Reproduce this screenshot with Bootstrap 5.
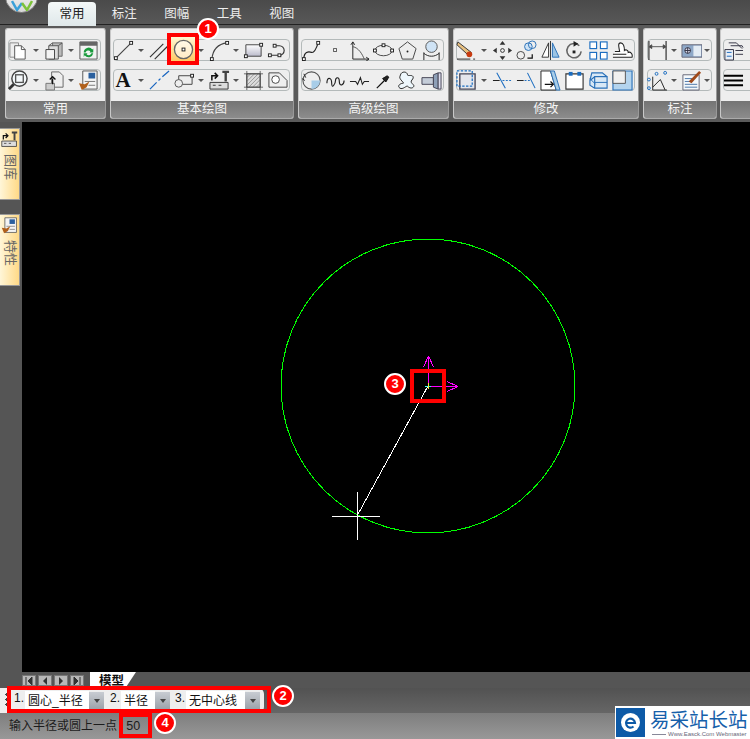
<!DOCTYPE html>
<html lang="zh-CN">
<head>
  <meta charset="UTF-8">
  <title>CAD</title>
  <link href="https://cdn.jsdelivr.net/npm/bootstrap@5.3.0/dist/css/bootstrap.min.css" rel="stylesheet">
  <style>
    body { margin: 0; background: #000; font-family: "Liberation Sans", "Noto Sans CJK SC", sans-serif; font-size: 12px; }
    .app { width: 750px; height: 739px; overflow: hidden; }
    /* top tabs */
    .tabbar { height: 25px; background: linear-gradient(#4a4a4a, #585858); border-bottom: 1px solid #222; padding-left: 48px; }
    .logo { left: 5px; top: -20px; width: 33px; height: 33px; background: linear-gradient(#fff, #d8d8d8); border: 1px solid #888; }
    .tab { width: 52.5px; text-align: center; color: #eee; line-height: 28px; font-size: 12.5px; }
    .tab.on { width: 48px; margin-top: 2px; height: 24px; line-height: 24px; color: #222; background: linear-gradient(#f4f8f8, #dfe8ea); border-radius: 4px 4px 0 0; margin-right: 2px; position: relative; z-index: 1; }
    /* ribbon */
    .ribbon { height: 97px; background: #5a5a5a; padding: 3px 0 0 5px; gap: 4px; overflow: hidden; }
    .grp { flex: none; height: 91px; background: #eee; border: 1px solid #aab; border-color: #c8c8c8 #999 #aaa #c8c8c8; border-radius: 3px; padding: 10px 2px 0; overflow: hidden; position: relative; }
    .g1 { width: 101px; } .g2 { width: 184px; } .g3 { width: 151px; } .g4 { width: 186px; }
    .g5 { width: 74px; padding-left: 3px; } .g6 { width: 60px; margin-left: -1px; }
    .cap { left: 0; right: 0; bottom: 0; height: 17px; line-height: 17px; text-align: center; color: #f4f4f4; font-size: 12.5px; background: linear-gradient(#747474, #8c8c8c); }
    .strip { height: 22px; border: 1px solid #b4baba; border-radius: 4px; margin-bottom: 8px; width: max-content; min-width: 30px; }
    .ic { width: 24px; height: 20px; flex: none; display: flex; align-items: center; justify-content: center; }
    .ic svg { width: 21px; height: 21px; overflow: visible; }
    .strip > :first-child { margin-left: -3px; }
    .ar { width: 12px; flex: none; height: 20px; display: flex; align-items: center; justify-content: center; }
    .ar.n { width: 10px; } .ar.t { width: 8px; }
    .ar::after { content: ""; border: 3px solid transparent; border-top: 3px solid #555; border-bottom: 0; }
    .serif { font: 700 21px "Liberation Serif", serif; color: #111; line-height: 20px; }
    .active-ic { height: 24px; margin-top: -2px; background: linear-gradient(#fff8d4, #ffc964); }
    /* middle */
    .middle { height: 550px; }
    .side { width: 22px; background: #555; padding-top: 6px; }
    .side-tab { width: 20px; height: 72px; background: linear-gradient(90deg, #fff6d8, #ffd986); border: 1px solid #999; border-left: 0; margin-bottom: 14px; color: #666; padding-top: 2px; }
    .side-tab svg { width: 17px; height: 17px; }
    .side-text { writing-mode: vertical-rl; text-orientation: sideways; font-size: 13px; line-height: 16px; margin-top: 6px; }
    .canvas { background: #000; }
    .canvas svg { display: block; shape-rendering: crispEdges; }
    /* sheet tabs */
    .sheets { height: 16px; background: #555; padding-left: 22px; }
    .nav-b { width: 14px; height: 11px; margin: 3px 2px 0 0; background: #b8b8b8; border: 1px solid #777; display: flex; align-items: center; justify-content: center; }
    .nav-b svg { width: 8px; height: 8px; }
    .sheet { margin-left: 4px; width: 46px; height: 14px; background: #fff; line-height: 18px; font-weight: 700; font-size: 12.5px; color: #111; padding-left: 9px; overflow: hidden; clip-path: polygon(0 0, 100% 0, 80% 100%, 0 100%); }
    /* command toolbar */
    .cmdrow { height: 25px; background: linear-gradient(#525252, #666); }
    .cmd { width: 264px; height: 25px; background: #eee; border-radius: 0 6px 6px 0; color: #111; padding-left: 5px; }
    .grip { width: 3px; height: 15px; margin-right: 6px; background: radial-gradient(circle at 1.5px 1.5px, #444 1.2px, transparent 1.4px) 0 0 / 3px 5px; }
    .num { width: 10px; font-size: 12px; margin-top: -5px; flex: none; }
    .num-2 { margin-left: 6px; } .num-3 { margin-left: 5px; }
    .field { height: 20px; line-height: 21px; background: #fff; padding-left: 3px; margin-left: 1px; font-size: 12px; flex: none; }
    .f1 { width: 64px; } .f2 { width: 34px; } .f3 { width: 59px; }
    .drop { width: 15px; height: 18px; flex: none; background: linear-gradient(#c8ccd2, #9aa0a8); display: flex; align-items: center; justify-content: center; }
    .drop::after { content: ""; border: 3px solid transparent; border-top: 4px solid #444; border-bottom: 0; }
    /* status */
    .status { height: 26px; background: linear-gradient(#7e7e7e, #989898); color: #1c1c1c; padding-left: 9px; line-height: 26px; }
    .status .sep { margin-left: 3px; }
    .status .val { margin-left: 3px; font-size: 12.5px; }
    .mark { right: 0; bottom: 0; width: 135px; height: 33px; background: #fff; padding: 2px 0 0 1px; }
    .mark-icon { width: 29px; height: 29px; background: #0d5aa7; flex: none; }
    .mark-title { color: #1660aa; font: 400 19.5px/18px "Noto Sans CJK SC", sans-serif; white-space: nowrap; margin: 2px 0 2px 5px; }
    .mark-sub { color: #667; font: 6px/8px "Liberation Sans", sans-serif; white-space: nowrap; margin-left: 7px; display: flex; align-items: center; gap: 2px; }
    .mark-sub::before { content: ""; width: 14px; border-top: 1px solid #889; }
    /* annotations */
    .box { border: 4px solid #f00; pointer-events: none; }
    .box-1 { left: 167px; top: 33px; width: 32px; height: 32px; }
    .box-2 { left: 7px; top: 686px; width: 264px; height: 27px; }
    .box-3 { left: 410px; top: 369px; width: 36px; height: 34px; }
    .box-4 { left: 119px; top: 713px; width: 33px; height: 25px; }
    .badge-n { width: 22px; height: 22px; background: #f00; border: 2.5px solid #fff; color: #fff; font: 700 13px/17px "Liberation Sans", sans-serif; text-align: center; }
    .badge-1 { left: 197px; top: 18px; } .badge-2 { left: 272px; top: 685px; }
    .badge-3 { left: 384px; top: 373px; } .badge-4 { left: 154px; top: 712px; }
  </style>
</head>
<body>
<svg width="0" height="0" class="position-absolute">
  <defs>
    <g id="node"><rect x="-1.5" y="-1.5" width="3" height="3" fill="#fff" stroke="#222" stroke-width="1"/></g>
    <symbol id="pages" viewBox="0 0 22 22"><path d="M2 3h9v15H2z" fill="#eee" stroke="#888"/><path d="M7 6h7l4 4v10H7z" fill="#fff" stroke="#555"/><path d="M14 6v4h4" fill="none" stroke="#555"/></symbol>
    <symbol id="copy3d" viewBox="0 0 22 22"><path d="M9 3h10v14H9z" fill="#bbb" stroke="#666"/><path d="M5 6h10v14H5zM5 6l4-3M15 6l4-3" fill="#ddd" stroke="#555"/><path d="M2 10h9v10H2z" fill="#f4f4f4" stroke="#444"/></symbol>
    <symbol id="refresh" viewBox="0 0 22 22"><path d="M2 2h18v18H2z" fill="#f2f2f2" stroke="#555"/><path d="M2 2h18v4H2z" fill="#666"/><path d="M6 13a5 5 0 0 1 9-3l1-1v4h-4l1-1a3 3 0 0 0-5 1zM16 14a5 5 0 0 1-9 2l-1 2v-4h4l-1 1a3 3 0 0 0 5-1z" fill="#1a9a3c"/></symbol>
    <symbol id="zoom" viewBox="0 0 22 22"><circle cx="12" cy="9" r="8" fill="#f4f8fa" stroke="#444" stroke-width="1.5"/><rect x="8" y="5" width="8" height="8" fill="none" stroke="#555" stroke-width="1.4"/><path d="M6 15l-5 5" stroke="#333" stroke-width="3"/></symbol>
    <symbol id="docarrow" viewBox="0 0 22 22"><path d="M8 2h8l4 4v12H8z" fill="#eee" stroke="#666"/><path d="M2 14h9v7H2z" fill="#ccc" stroke="#777"/><path d="M9 9v6M6 10l3-3 3 3" fill="none" stroke="#111" stroke-width="1.4"/></symbol>
    <symbol id="brushwin" viewBox="0 0 22 22"><path d="M5 1h15v19H5z" fill="#f4f4f4" stroke="#555"/><path d="M11 3h7v6h-7z" fill="#2a5f9e"/><path d="M7 12h11M11 16h7" stroke="#777"/><path d="M1 14l6 1 5-3-3 6-5 3z" fill="#b0601c"/></symbol>
    <symbol id="line" viewBox="0 0 22 22"><path d="M3 19L19 3" stroke="#444" stroke-width="1.2"/><use href="#node" x="3" y="19"/><use href="#node" x="19" y="3"/></symbol>
    <symbol id="parallel" viewBox="0 0 22 22"><path d="M1 18L15 4M6 20L20 6" stroke="#333" stroke-width="1.2" fill="none"/></symbol>
    <symbol id="circle" viewBox="0 0 22 22"><circle cx="11" cy="11" r="9.5" fill="#fff" fill-opacity=".6" stroke="#666" stroke-width="1.4"/><rect x="9.5" y="9.5" width="3" height="3" fill="#fff" stroke="#222"/></symbol>
    <symbol id="arc" viewBox="0 0 22 22"><path d="M3 20C4 10 10 4 19 3" fill="none" stroke="#444" stroke-width="1.2"/><use href="#node" x="3" y="20"/><use href="#node" x="19" y="3"/></symbol>
    <symbol id="rect" viewBox="0 0 22 22"><defs><linearGradient id="lg" x1="0" y1="0" x2="0" y2="1"><stop stop-color="#fff"/><stop offset="1" stop-color="#bbc"/></linearGradient></defs><path d="M3 5h16v12H3z" fill="url(#lg)" stroke="#444"/><use href="#node" x="19" y="5"/><use href="#node" x="3" y="17"/></symbol>
    <symbol id="pline" viewBox="0 0 22 22"><path d="M3 16h10a5 5 0 0 0 0-10h-5" fill="none" stroke="#333" stroke-width="1.2"/><use href="#node" x="3" y="16"/><use href="#node" x="13" y="16"/><use href="#node" x="8" y="6"/></symbol>
    <symbol id="dash" viewBox="0 0 22 22"><path d="M1 20l7-7M10 11l2-2M14 7l7-6" stroke="#1a66c0" stroke-width="1.3"/></symbol>
    <symbol id="insert" viewBox="0 0 22 22"><path d="M6 6h14v9H6z" fill="#eee" stroke="#444"/><circle cx="6" cy="14" r="4" fill="#eee" stroke="#555"/><use href="#node" x="20" y="6"/></symbol>
    <symbol id="block" viewBox="0 0 22 22"><path d="M1 13h19v7H1z" fill="#ddd" stroke="#333"/><path d="M14 2h7M17.5 2v10" stroke="#444" stroke-width="2.5"/><path d="M3 11V6h5M6 3l3 3-3 3" fill="none" stroke="#111" stroke-width="1.6"/><path d="M4 16h3M10 16h3" stroke="#333"/></symbol>
    <symbol id="hatch" viewBox="0 0 22 22"><path d="M4 4h14v14H4z" fill="#ddd" stroke="#444"/><path d="M4 8l4-4M4 12l8-8M4 16l12-12M6 18l12-12M10 18l8-8M14 18l4-4" stroke="#777" stroke-width=".7"/><path d="M1 4h20M1 18h20M4 1v20M18 1v20" stroke="#444" stroke-width=".8"/></symbol>
    <symbol id="shape" viewBox="0 0 22 22"><path d="M2 3h11l8 8v7H2z" fill="#eee" stroke="#444"/><circle cx="9" cy="10" r="4" fill="#fff" stroke="#444"/></symbol>
    <symbol id="spline" viewBox="0 0 22 22"><path d="M3 20c0-8 5-8 8-7s5-4 7-10" fill="none" stroke="#222" stroke-width="1.3"/><use href="#node" x="3" y="20"/><use href="#node" x="18" y="3"/></symbol>
    <symbol id="point" viewBox="0 0 22 22"><rect x="9" y="9" width="3" height="3" fill="#fff" stroke="#555"/></symbol>
    <symbol id="axis" viewBox="0 0 22 22"><path d="M4 2v18h17M4 2L2 5M4 2l2 3M21 20l-3-2M21 20l-3 2" fill="none" stroke="#222"/><path d="M4 7c6 1 10 8 12 13" fill="none" stroke="#555"/></symbol>
    <symbol id="ellipse" viewBox="0 0 22 22"><ellipse cx="11" cy="11" rx="9" ry="5.5" fill="#eee" stroke="#444"/><use href="#node" x="2" y="11"/><use href="#node" x="20" y="11"/><use href="#node" x="11" y="5.5"/></symbol>
    <symbol id="penta" viewBox="0 0 22 22"><path d="M11 2l9 7-3.5 11h-11L2 9z" fill="#eee" stroke="#444"/><circle cx="11" cy="12" r="1" fill="#222"/></symbol>
    <symbol id="ball" viewBox="0 0 22 22"><circle cx="11" cy="7" r="6" fill="#cfe3f5" stroke="#555"/><path d="M3 13v8M19 13v8M3 14c5 4 11 4 16 0" fill="none" stroke="#222"/></symbol>
    <symbol id="quad" viewBox="0 0 22 22"><circle cx="11" cy="11" r="9" fill="none" stroke="#555" stroke-width="1.2"/><path d="M11 11h9a9 9 0 0 1-9 9z" fill="#a8cde8"/><path d="M3 4l2 4M1 9l3 2" stroke="#222"/></symbol>
    <symbol id="wave" viewBox="0 0 22 22"><path d="M2 14c0-7 5-7 5 0s4 0 4-3 4-5 4 1 5 4 5-1" fill="none" stroke="#222" stroke-width="1.2"/></symbol>
    <symbol id="zig" viewBox="0 0 22 22"><path d="M1 12h6l2 3 3-7 2 7 2-3h5" fill="none" stroke="#222" stroke-width="1.1"/></symbol>
    <symbol id="pin" viewBox="0 0 22 22"><path d="M4 19l8-8" stroke="#111" stroke-width="1.3"/><path d="M10 9l5-3 1.5 1.5-3 5z" fill="#222" stroke="#111"/></symbol>
    <symbol id="cloud" viewBox="0 0 22 22"><path d="M5 3c3-2 6 0 6 2s6-1 6 3c0 2-3 3-2 5s4 3 2 5-5 0-6-1-5 4-8 2 0-5 3-5-4-4-3-7 1-3 2-4z" fill="#eef7fc" stroke="#222"/></symbol>
    <symbol id="cyl" viewBox="0 0 22 22"><path d="M1 8h12v7H1z" fill="#c4ccd8" stroke="#445"/><path d="M13 5l5-2v17l-5-2z" fill="#8ea0b8" stroke="#445"/><path d="M18 3h3v17h-3z" fill="#dde" stroke="#445"/></symbol>
    <symbol id="eraser" viewBox="0 0 22 22"><path d="M2 2l14 11-3 3L1 5z" fill="#e8c080" stroke="#333"/><circle cx="14" cy="15" r="3" fill="#c83a10"/><path d="M1 20h14M18 20h2" stroke="#222"/></symbol>
    <symbol id="move" viewBox="0 0 22 22"><path d="M11 1l-3 4h6zM11 21l-3-4h6zM1 11l4-3v6zM21 11l-4-3v6z" fill="#333"/><circle cx="11" cy="11" r="2" fill="none" stroke="#333"/></symbol>
    <symbol id="copyc" viewBox="0 0 22 22"><circle cx="5" cy="16" r="4" fill="none" stroke="#444"/><circle cx="13" cy="7" r="4" fill="#cfe3f5" stroke="#2a70b8"/><circle cx="17" cy="5" r="4" fill="none" stroke="#2a70b8"/><path d="M12 19h5v-4" fill="none" stroke="#111" stroke-width="1.3"/></symbol>
    <symbol id="mirror" viewBox="0 0 22 22"><path d="M9 3L2 18h7z" fill="#fff" stroke="#333"/><path d="M13 3l7 15h-7z" fill="#9cc4e4" stroke="#2a70b8"/><path d="M11 1v20" stroke="#333"/></symbol>
    <symbol id="rotate" viewBox="0 0 22 22"><path d="M16 6A7.5 7.5 0 1 0 18 12" fill="none" stroke="#666" stroke-width="1.6"/><path d="M10 1l5 3-5 3z" fill="#222"/><rect x="9" y="11" width="3" height="3" fill="#222"/></symbol>
    <symbol id="grid" viewBox="0 0 22 22"><g fill="#fff" stroke="#1a6cc0" stroke-width="1.2"><rect x="2" y="2" width="7" height="7"/><rect x="13" y="2" width="7" height="7"/><rect x="2" y="13" width="7" height="7"/><rect x="13" y="13" width="7" height="7"/></g></symbol>
    <symbol id="cloudline" viewBox="0 0 22 22"><path d="M1 15h14M1 18h20c1-4-2-6-4-5 0-3-3-3-4-2 0-4-1-8-4-8S7 7 8 12H3" fill="#fff" stroke="#222" stroke-width="1.1"/></symbol>
    <symbol id="dashbox" viewBox="0 0 22 22"><path d="M4 4h16v16H4z" fill="#e4e6ec" stroke="#445" stroke-width="1.4"/><path d="M1 1h16v16H1z" fill="none" stroke="#1a6cc0" stroke-width="1.3" stroke-dasharray="2.5 1.5"/></symbol>
    <symbol id="trim" viewBox="0 0 22 22"><path d="M5 3l9 16" stroke="#1a6cc0" stroke-width="1.1"/><path d="M1 11h7" stroke="#222" stroke-width="1.1"/><path d="M11 11h10" stroke="#1a6cc0" stroke-dasharray="2 1.5"/></symbol>
    <symbol id="extend" viewBox="0 0 22 22"><path d="M12 3l8 16" stroke="#1a6cc0" stroke-width="1.1"/><path d="M1 11h7" stroke="#222" stroke-width="1.1"/><path d="M9 11h6" stroke="#1a6cc0" stroke-dasharray="2 1.5"/></symbol>
    <symbol id="stretch" viewBox="0 0 22 22"><path d="M1 1h10l6 20H1z" fill="#fff" stroke="#222"/><path d="M11 1l6 20h4L15 1z" fill="#a8cde8" stroke="#2a70b8"/><path d="M5 15h9M11 12l3 3-3 3" fill="none" stroke="#111" stroke-width="1.3"/></symbol>
    <symbol id="rectdots" viewBox="0 0 22 22"><path d="M2 4h18v16H2z" fill="#fff" stroke="#333" stroke-width="1.2"/><rect x="5" y="2" width="4" height="4" fill="#1a6cc0"/><rect x="14" y="2" width="4" height="4" fill="#1a6cc0"/></symbol>
    <symbol id="box3d" viewBox="0 0 22 22"><path d="M7 7h13v12H7zM7 7l-5 4v5l5 3M20 7L15 3H4L2 11" fill="#d8e8f6" stroke="#2a70b8" stroke-width="1.2"/><path d="M2 9l6 6M7 13h13" stroke="#2a70b8"/></symbol>
    <symbol id="offset" viewBox="0 0 22 22"><path d="M1 1h20v20H1z" fill="#b4d4ee" stroke="#2a70b8" stroke-width="1.2"/><path d="M1 1h13v13H1z" fill="#f0f0f0" stroke="#555"/></symbol>
    <symbol id="dim" viewBox="0 0 22 22"><path d="M2 1v20M20 1v20" stroke="#444" stroke-width="1.4"/><path d="M2 7h18M2 7l3-2v4zM20 7l-3-2v4z" stroke="#555"/></symbol>
    <symbol id="tol" viewBox="0 0 22 22"><path d="M1 5h21v13H1z" fill="#8ea8c8" stroke="#667"/><circle cx="7" cy="11" r="3" fill="#dde" stroke="#334"/><path d="M4 11h6M7 8v6" stroke="#334"/><rect x="13" y="6" width="8" height="11" fill="#e4ecf4"/></symbol>
    <symbol id="coord" viewBox="0 0 22 22"><path d="M6 7v14h15M6 18L14 10l5 11" fill="none" stroke="#222"/><g fill="none" stroke="#1a6cc0"><circle cx="2" cy="10" r="1.5"/><circle cx="2" cy="19" r="1.5"/><circle cx="10" cy="4" r="1.5"/><circle cx="19" cy="3" r="1.5"/></g></symbol>
    <symbol id="note" viewBox="0 0 22 22"><path d="M2 5h17v16H2z" fill="#f4f8fb" stroke="#667"/><path d="M4 9h8M4 12h8M4 15h13M4 18h13" stroke="#4a74a8"/><path d="M8 12L19 1l2 2-10 11z" fill="#a04a1c"/></symbol>
    <symbol id="list" viewBox="0 0 22 22"><path d="M2 10h9v11H2z" fill="#e8eef6" stroke="#334"/><path d="M4 13h5M4 17h5" stroke="#1a6cc0"/><path d="M6 3h8l6 6M8 6h12l1 2M13 11h8M13 15h8" fill="none" stroke="#334"/></symbol>
    <symbol id="weight" viewBox="0 0 22 22"><path d="M1 6h20M1 11h20M1 16h20" stroke="#000" stroke-width="2"/></symbol>
  </defs>
</svg>

<div class="app position-relative d-flex flex-column">
  <!-- tab bar -->
  <div class="tabbar d-flex position-relative">
    <div class="logo position-absolute rounded-circle overflow-hidden d-flex align-items-end justify-content-center">
      <svg width="22" height="12" viewBox="0 0 22 12"><path d="M1 1l5 9 5-7" fill="none" stroke="#3aa0d8" stroke-width="2.5"/><path d="M11 3l5 7 5-9" fill="none" stroke="#7cc23a" stroke-width="2.5"/></svg>
    </div>
    <div class="tab on">常用</div>
    <div class="tab">标注</div>
    <div class="tab">图幅</div>
    <div class="tab">工具</div>
    <div class="tab">视图</div>
  </div>

  <!-- ribbon -->
  <div class="ribbon d-flex">
    <div class="grp g1">
      <div class="strip d-flex align-items-center"><span class="ic"><svg><use href="#pages"/></svg></span><span class="ar"></span><span class="ic"><svg><use href="#copy3d"/></svg></span><span class="ar n"></span><span class="ic"><svg><use href="#refresh"/></svg></span></div>
      <div class="strip d-flex align-items-center"><span class="ic"><svg><use href="#zoom"/></svg></span><span class="ar"></span><span class="ic"><svg><use href="#docarrow"/></svg></span><span class="ar n"></span><span class="ic"><svg><use href="#brushwin"/></svg></span></div>
      <div class="cap position-absolute">常用</div>
    </div>
    <div class="grp g2">
      <div class="strip d-flex align-items-center"><span class="ic"><svg><use href="#line"/></svg></span><span class="ar"></span><span class="ic"><svg><use href="#parallel"/></svg></span><span class="ic active-ic"><svg><use href="#circle"/></svg></span><span class="ar"></span><span class="ic"><svg><use href="#arc"/></svg></span><span class="ar n"></span><span class="ic"><svg><use href="#rect"/></svg></span><span class="ic"><svg><use href="#pline"/></svg></span></div>
      <div class="strip d-flex align-items-center"><span class="ic serif">A</span><span class="ar"></span><span class="ic"><svg><use href="#dash"/></svg></span><span class="ic"><svg><use href="#insert"/></svg></span><span class="ar"></span><span class="ic"><svg><use href="#block"/></svg></span><span class="ar n"></span><span class="ic"><svg><use href="#hatch"/></svg></span><span class="ic"><svg><use href="#shape"/></svg></span></div>
      <div class="cap position-absolute">基本绘图</div>
    </div>
    <div class="grp g3">
      <div class="strip d-flex align-items-center"><span class="ic"><svg><use href="#spline"/></svg></span><span class="ic"><svg><use href="#point"/></svg></span><span class="ic"><svg><use href="#axis"/></svg></span><span class="ic"><svg><use href="#ellipse"/></svg></span><span class="ic"><svg><use href="#penta"/></svg></span><span class="ic"><svg><use href="#ball"/></svg></span></div>
      <div class="strip d-flex align-items-center"><span class="ic"><svg><use href="#quad"/></svg></span><span class="ic"><svg><use href="#wave"/></svg></span><span class="ic"><svg><use href="#zig"/></svg></span><span class="ic"><svg><use href="#pin"/></svg></span><span class="ic"><svg><use href="#cloud"/></svg></span><span class="ic"><svg><use href="#cyl"/></svg></span></div>
      <div class="cap position-absolute">高级绘图</div>
    </div>
    <div class="grp g4">
      <div class="strip d-flex align-items-center"><span class="ic"><svg><use href="#eraser"/></svg></span><span class="ar"></span><span class="ic"><svg><use href="#move"/></svg></span><span class="ic"><svg><use href="#copyc"/></svg></span><span class="ic"><svg><use href="#mirror"/></svg></span><span class="ic"><svg><use href="#rotate"/></svg></span><span class="ic"><svg><use href="#grid"/></svg></span><span class="ic"><svg><use href="#cloudline"/></svg></span></div>
      <div class="strip d-flex align-items-center"><span class="ic"><svg><use href="#dashbox"/></svg></span><span class="ar"></span><span class="ic"><svg><use href="#trim"/></svg></span><span class="ic"><svg><use href="#extend"/></svg></span><span class="ic"><svg><use href="#stretch"/></svg></span><span class="ic"><svg><use href="#rectdots"/></svg></span><span class="ic"><svg><use href="#box3d"/></svg></span><span class="ic"><svg><use href="#offset"/></svg></span></div>
      <div class="cap position-absolute">修改</div>
    </div>
    <div class="grp g5">
      <div class="strip d-flex align-items-center"><span class="ic"><svg><use href="#dim"/></svg></span><span class="ar n"></span><span class="ic"><svg><use href="#tol"/></svg></span><span class="ar t"></span></div>
      <div class="strip d-flex align-items-center"><span class="ic"><svg><use href="#coord"/></svg></span><span class="ar n"></span><span class="ic"><svg><use href="#note"/></svg></span><span class="ar t"></span></div>
      <div class="cap position-absolute">标注</div>
    </div>
    <div class="grp g6">
      <div class="strip d-flex align-items-center"><span class="ic"><svg><use href="#list"/></svg></span><span class="ic"></span></div>
      <div class="strip d-flex align-items-center"><span class="ic"><svg><use href="#weight"/></svg></span><span class="ic"></span></div>
      <div class="cap position-absolute"></div>
    </div>
  </div>

  <!-- side panel and canvas -->
  <div class="middle d-flex">
    <div class="side flex-shrink-0">
      <div class="side-tab d-flex flex-column align-items-center">
        <svg viewBox="0 0 22 22"><use href="#block"/></svg>
        <span class="side-text">图库</span>
      </div>
      <div class="side-tab d-flex flex-column align-items-center">
        <svg viewBox="0 0 22 22"><use href="#brushwin"/></svg>
        <span class="side-text">特性</span>
      </div>
    </div>
    <div class="canvas flex-grow-1">
      <!-- viewBox keeps page coordinates -->
      <svg width="728" height="550" viewBox="22 122 728 550">
        <circle cx="428" cy="386" r="147" fill="none" stroke="#0f0" stroke-width="1"/>
        <path d="M428 386L357 516" stroke="#fff" stroke-width="1"/>
        <path d="M332 516.5h48M357.5 492v48" stroke="#fff" stroke-width="1"/>
        <path d="M428.5 386V356M428.5 356l-5 11M428.5 356l5 11M428 386.5H458M458 386.5l-11-5M458 386.5l-11 5" fill="none" stroke="#f0f" stroke-width="1"/>
        <path d="M425 386.5h6" stroke="#3fe" stroke-width="1.5"/>
        <path d="M428.5 383v6" stroke="#ee3" stroke-width="1.5"/>
      </svg>
    </div>
  </div>

  <!-- sheet tabs -->
  <div class="sheets d-flex">
    <span class="nav-b"><svg viewBox="0 0 8 8"><path d="M1 0v8M7 0L3 4l4 4z" fill="#333" stroke="#333"/></svg></span>
    <span class="nav-b"><svg viewBox="0 0 8 8"><path d="M6 0L2 4l4 4z" fill="#333"/></svg></span>
    <span class="nav-b"><svg viewBox="0 0 8 8"><path d="M2 0l4 4-4 4z" fill="#333"/></svg></span>
    <span class="nav-b"><svg viewBox="0 0 8 8"><path d="M7 0v8M1 0l4 4-4 4z" fill="#333" stroke="#333"/></svg></span>
    <div class="sheet">模型</div>
  </div>

  <!-- command options -->
  <div class="cmdrow">
    <div class="cmd d-flex align-items-center">
      <span class="grip"></span>
      <span class="num">1.</span><span class="field f1">圆心_半径</span><span class="drop"></span>
      <span class="num num-2">2.</span><span class="field f2">半径</span><span class="drop"></span>
      <span class="num num-3">3.</span><span class="field f3">无中心线</span><span class="drop"></span>
    </div>
  </div>

  <!-- status -->
  <div class="status">输入半径或圆上一点<span class="sep">:</span><span class="val">50</span></div>

  <!-- watermark -->
  <div class="mark position-absolute d-flex">
    <div class="mark-icon d-flex align-items-center justify-content-center">
      <svg width="21" height="21" viewBox="0 0 21 21"><circle cx="10.5" cy="10.5" r="9.5" fill="#fff"/><path d="M6 11h9a4.5 4.5 0 1 0-1.5 3.5" fill="none" stroke="#0d5aa7" stroke-width="2.2"/></svg>
    </div>
    <div>
      <div class="mark-title">易采站长站</div>
      <div class="mark-sub">Www.Easck.Com Webmaster</div>
    </div>
  </div>

  <!-- red callouts over the screenshot -->
  <div class="box box-1 position-absolute"></div>
  <div class="badge-n badge-1 position-absolute rounded-circle">1</div>
  <div class="box box-2 position-absolute"></div>
  <div class="badge-n badge-2 position-absolute rounded-circle">2</div>
  <div class="box box-3 position-absolute"></div>
  <div class="badge-n badge-3 position-absolute rounded-circle">3</div>
  <div class="box box-4 position-absolute"></div>
  <div class="badge-n badge-4 position-absolute rounded-circle">4</div>
</div>

<script src="https://cdn.jsdelivr.net/npm/bootstrap@5.3.0/dist/js/bootstrap.bundle.min.js"></script>
</body>
</html>
